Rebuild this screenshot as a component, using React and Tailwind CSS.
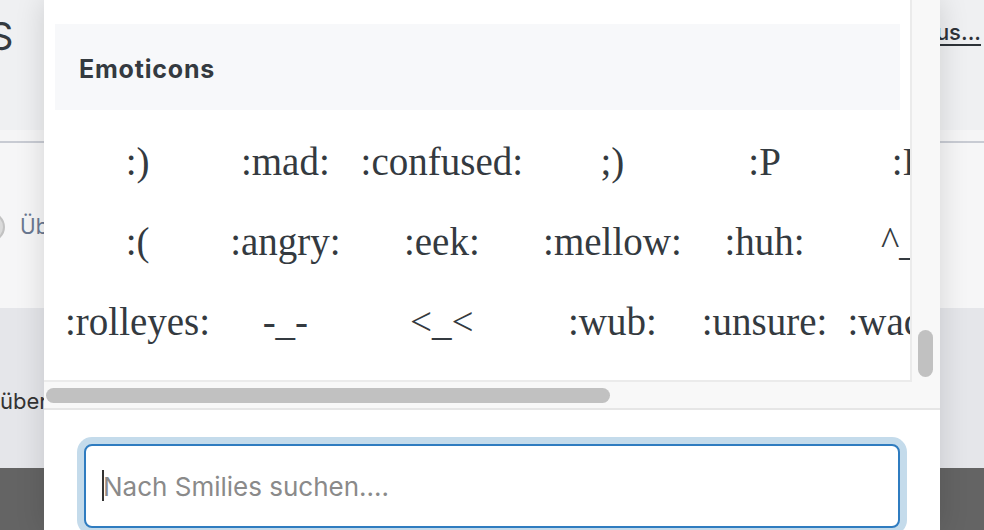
import React from "react";

const rows = [
  [":)", ":mad:", ":confused:", ";)", ":P", ":I:"],
  [":(", ":angry:", ":eek:", ":mellow:", ":huh:", "^_^"],
  [":rolleyes:", "-_-", "<_<", ":wub:", ":unsure:", ":wacko:"],
];

const App = () => {
  return (
    <div className="relative w-[984px] h-[530px] overflow-hidden font-['Inter',sans-serif]">
      {/* page behind the dialog */}
      <div className="flex flex-col h-full">
        <div className="h-[130px] bg-[#eff0f2] flex justify-between items-start">
          <span className="-ml-[11px] mt-[17px] text-[38px] leading-none font-normal text-[#343a40]">
            S
          </span>
          <span className="mt-[21px] pr-[3px] text-[22px] leading-none font-medium text-[#2d3238] underline decoration-2 underline-offset-[4px]">
            Smilies-Plus...
          </span>
        </div>
        <div className="h-[11px] bg-[#f5f5f6]" />
        <div className="h-[2px] bg-[#c8cbd3]" />
        <div className="h-[165px] bg-[#f6f6f7] pt-[69px]">
          <div className="flex items-center h-[30px]">
            <div className="-ml-[25px] w-[30px] h-[30px] rounded-full border-2 border-[#c2c2c2] bg-[#dadada]" />
            <span className="ml-[15px] text-[21px] leading-[30px] text-[#6a7891]">
              Über
            </span>
          </div>
        </div>
        <div className="h-[160px] bg-[#e5e6ea] pt-[80px]">
          <span className="text-[22px] leading-[26px] text-[#333]">über</span>
        </div>
        <div className="flex-1 bg-[#646464]" />
      </div>

      {/* dialog */}
      <div className="absolute left-[44px] top-0 w-[896px] h-[530px] bg-white shadow-[0_0_28px_rgba(0,0,0,0.14)]">
        <div className="bg-[#f8f8f8] border-b-2 border-[#e6e6e6]">
          <div className="flex h-[382px]">
            <div className="w-[868px] h-[382px] shrink-0 overflow-hidden bg-white border-r-2 border-b-2 border-[#ebebeb] pl-[11px] pt-6">
              <div className="w-[845px] h-[86px] bg-[#f7f8fa] pl-6 pt-[30px] text-[25px] leading-[30px] tracking-[0.8px] font-bold text-[#343a40]">
                Emoticons
              </div>
              <table className="mt-3 whitespace-nowrap font-['Liberation_Serif','Times_New_Roman',serif] text-[39px] leading-[64px] text-[#343a40]">
                <tbody>
                  {rows.map((row, i) => (
                    <tr key={i}>
                      {row.map((s, j) => (
                        <td key={j} className="px-2.5 py-2 text-center">
                          {s}
                        </td>
                      ))}
                    </tr>
                  ))}
                </tbody>
              </table>
            </div>
            <div className="flex-1 pl-[6px] pt-[330px]">
              <div className="w-[15px] h-[47px] rounded-full bg-[#c1c1c1]" />
            </div>
          </div>
          <div className="h-[26px] pt-[6px] pl-[2px]">
            <div className="w-[564px] h-[15px] rounded-full bg-[#c1c1c1]" />
          </div>
        </div>

        <div className="px-10 pt-[34px]">
          <div className="relative h-[84px] rounded-[8px] border-2 border-[#2f7cc0] bg-white shadow-[0_0_0_7px_#c4dbeb]">
            <input
              type="text"
              placeholder="Nach Smilies suchen...."
              className="w-full h-full rounded-[8px] bg-transparent pl-[17px] text-[26px] text-[#333] outline-none placeholder:text-[#8a8a8a]"
            />
            <span className="absolute left-[16px] top-[24px] w-[2px] h-[31px] bg-[#333]" />
          </div>
        </div>
      </div>
    </div>
  );
};

export default App;
